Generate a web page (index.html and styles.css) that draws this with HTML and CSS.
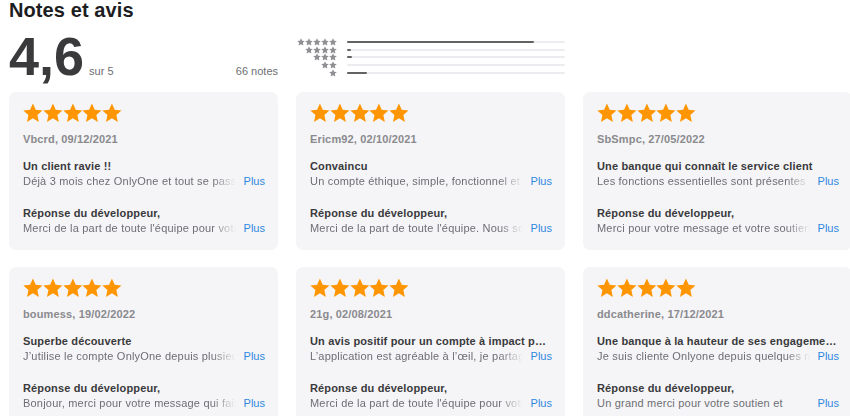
FILE: index.html
```html
<!DOCTYPE html>
<html lang="fr">
<head>
<meta charset="utf-8">
<title>Notes et avis</title>
<link rel="stylesheet" href="styles.css">
</head>
<body>
<svg class="defs" width="0" height="0" aria-hidden="true">
  <defs>
    <symbol id="star" viewBox="0 0 24 24">
      <polygon points="12,0.6 15.4,8.2 23.6,8.9 17.4,14.4 19.2,22.8 12,18.5 4.8,22.8 6.6,14.4 0.4,8.9 8.6,8.2"/>
    </symbol>
  </defs>
</svg>

<main class="page">
  <h2 class="heading">Notes et avis</h2>

  <section class="summary">
    <div class="score">
      <span class="score-value">4,6</span>
      <span class="score-max">sur 5</span>
      <span class="score-count">66 notes</span>
    </div>
    <div class="histogram">
      <div class="hrow">
        <span class="hstars"><svg><use href="#star"/></svg><svg><use href="#star"/></svg><svg><use href="#star"/></svg><svg><use href="#star"/></svg><svg><use href="#star"/></svg></span>
        <span class="track"><span class="fill" style="width:86%"></span></span>
      </div>
      <div class="hrow">
        <span class="hstars"><svg><use href="#star"/></svg><svg><use href="#star"/></svg><svg><use href="#star"/></svg><svg><use href="#star"/></svg></span>
        <span class="track"><span class="fill" style="width:2%"></span></span>
      </div>
      <div class="hrow">
        <span class="hstars"><svg><use href="#star"/></svg><svg><use href="#star"/></svg><svg><use href="#star"/></svg></span>
        <span class="track"><span class="fill" style="width:2.5%"></span></span>
      </div>
      <div class="hrow">
        <span class="hstars"><svg><use href="#star"/></svg><svg><use href="#star"/></svg></span>
        <span class="track"><span class="fill" style="width:0%"></span></span>
      </div>
      <div class="hrow">
        <span class="hstars"><svg><use href="#star"/></svg></span>
        <span class="track"><span class="fill" style="width:9%"></span></span>
      </div>
    </div>
  </section>

  <section class="reviews">
    <article class="card">
      <div class="stars"><svg><use href="#star"/></svg><svg><use href="#star"/></svg><svg><use href="#star"/></svg><svg><use href="#star"/></svg><svg><use href="#star"/></svg></div>
      <div class="author">Vbcrd, 09/12/2021</div>
      <h3 class="title">Un client ravie !!</h3>
      <div class="line"><span class="text">Déjà 3 mois chez OnlyOne et tout se passe très bien</span><a class="more">Plus</a></div>
      <h3 class="title reply">Réponse du développeur,</h3>
      <div class="line"><span class="text">Merci de la part de toute l'équipe pour votre confiance</span><a class="more">Plus</a></div>
    </article>

    <article class="card">
      <div class="stars"><svg><use href="#star"/></svg><svg><use href="#star"/></svg><svg><use href="#star"/></svg><svg><use href="#star"/></svg><svg><use href="#star"/></svg></div>
      <div class="author">Ericm92, 02/10/2021</div>
      <h3 class="title">Convaincu</h3>
      <div class="line"><span class="text">Un compte éthique, simple, fonctionnel et efficace</span><a class="more">Plus</a></div>
      <h3 class="title reply">Réponse du développeur,</h3>
      <div class="line"><span class="text">Merci de la part de toute l'équipe. Nous sommes ravis</span><a class="more">Plus</a></div>
    </article>

    <article class="card">
      <div class="stars"><svg><use href="#star"/></svg><svg><use href="#star"/></svg><svg><use href="#star"/></svg><svg><use href="#star"/></svg><svg><use href="#star"/></svg></div>
      <div class="author">SbSmpc, 27/05/2022</div>
      <h3 class="title">Une banque qui connaît le service client</h3>
      <div class="line"><span class="text">Les fonctions essentielles sont présentes et efficaces</span><a class="more">Plus</a></div>
      <h3 class="title reply">Réponse du développeur,</h3>
      <div class="line"><span class="text">Merci pour votre message et votre soutien sans faille</span><a class="more">Plus</a></div>
    </article>

    <article class="card">
      <div class="stars"><svg><use href="#star"/></svg><svg><use href="#star"/></svg><svg><use href="#star"/></svg><svg><use href="#star"/></svg><svg><use href="#star"/></svg></div>
      <div class="author">boumess, 19/02/2022</div>
      <h3 class="title">Superbe découverte</h3>
      <div class="line"><span class="text">J’utilise le compte OnlyOne depuis plusieurs mois</span><a class="more">Plus</a></div>
      <h3 class="title reply">Réponse du développeur,</h3>
      <div class="line"><span class="text">Bonjour, merci pour votre message qui fait plaisir</span><a class="more">Plus</a></div>
    </article>

    <article class="card">
      <div class="stars"><svg><use href="#star"/></svg><svg><use href="#star"/></svg><svg><use href="#star"/></svg><svg><use href="#star"/></svg><svg><use href="#star"/></svg></div>
      <div class="author">21g, 02/08/2021</div>
      <h3 class="title">Un avis positif pour un compte à impact positif</h3>
      <div class="line"><span class="text">L’application est agréable à l’œil, je partage mon avis</span><a class="more">Plus</a></div>
      <h3 class="title reply">Réponse du développeur,</h3>
      <div class="line"><span class="text">Merci de la part de toute l'équipe pour votre avis</span><a class="more">Plus</a></div>
    </article>

    <article class="card">
      <div class="stars"><svg><use href="#star"/></svg><svg><use href="#star"/></svg><svg><use href="#star"/></svg><svg><use href="#star"/></svg><svg><use href="#star"/></svg></div>
      <div class="author">ddcatherine, 17/12/2021</div>
      <h3 class="title">Une banque à la hauteur de ses engagements</h3>
      <div class="line"><span class="text">Je suis cliente Onlyone depuis quelques mois</span><a class="more">Plus</a></div>
      <h3 class="title reply">Réponse du développeur,</h3>
      <div class="line"><span class="text plain">Un grand merci pour votre soutien et</span><a class="more">Plus</a></div>
    </article>
  </section>
</main>
</body>
</html>
```

FILE: styles.css
```css
html, body {
  margin: 0;
  padding: 0;
  overflow: hidden;
  background: #fff;
}

body {
  font-family: "Liberation Sans", Arial, sans-serif;
  color: #1d1d1f;
  width: 850px;
  height: 416px;
}

.defs {
  position: absolute;
  width: 0;
  height: 0;
}

.page {
  padding: 0 0 0 9px;
  width: 900px;
}

.heading {
  margin: 0;
  font-size: 20px;
  line-height: 21px;
  font-weight: 700;
  color: #1d1d1f;
  letter-spacing: 0.1px;
}

.summary {
  display: grid;
  grid-template-columns: 269px 269px;
  column-gap: 18px;
  height: 71px;
}

.score {
  display: flex;
  align-items: baseline;
  margin-top: 8px;
  height: 54px;
}

.score-value {
  font-size: 54px;
  line-height: 54px;
  font-weight: 700;
  color: #3a3a3c;
}

.score-max {
  margin-left: 5px;
  font-size: 11px;
  color: #6e6e73;
}

.score-count {
  margin-left: auto;
  font-size: 11px;
  color: #6e6e73;
}

.histogram {
  margin-top: 17px;
  display: flex;
  flex-direction: column;
}

.hrow {
  height: 7.7px;
  display: flex;
  align-items: center;
}

.hstars {
  width: 41px;
  display: flex;
  justify-content: flex-end;
  flex: none;
}

.hstars svg {
  width: 8px;
  height: 8px;
  fill: #8e8e93;
}

.track {
  margin-left: 10px;
  flex: 1;
  height: 2px;
  background: #ececf0;
  border-radius: 1px;
  display: flex;
}

.fill {
  display: block;
  height: 2px;
  background: #636366;
  border-radius: 1px;
}

.reviews {
  display: grid;
  grid-template-columns: 269px 269px 269px;
  column-gap: 18px;
  row-gap: 17px;
}

.card {
  background: #f5f5f7;
  border-radius: 7px;
  height: 158px;
  box-sizing: border-box;
  padding: 11px 13px 0 14px;
}

.stars {
  display: flex;
  height: 20px;
}

.stars svg {
  width: 19.8px;
  height: 20px;
  fill: #ff9500;
}

.author {
  margin-top: 8px;
  font-size: 11px;
  line-height: 16px;
  font-weight: 700;
  color: #8a8a8e;
  letter-spacing: 0.15px;
}

.title {
  margin: 12px 0 0;
  font-size: 11px;
  line-height: 15px;
  font-weight: 700;
  color: #3a3a3c;
  letter-spacing: 0.15px;
  white-space: nowrap;
  overflow: hidden;
  text-overflow: ellipsis;
}

.title.reply {
  margin-top: 17px;
}

.line {
  display: flex;
  font-size: 11px;
  line-height: 15px;
  letter-spacing: 0.2px;
}

.text {
  flex: 1;
  min-width: 0;
  white-space: nowrap;
  overflow: hidden;
  color: #6e6e73;
  -webkit-mask-image: linear-gradient(to right, #000 calc(100% - 26px), transparent calc(100% - 2px));
  mask-image: linear-gradient(to right, #000 calc(100% - 26px), transparent calc(100% - 2px));
}

.text.plain {
  -webkit-mask-image: none;
  mask-image: none;
}

.more {
  margin-left: 6px;
  color: #2f88e0;
  flex: none;
  letter-spacing: 0;
}
```
